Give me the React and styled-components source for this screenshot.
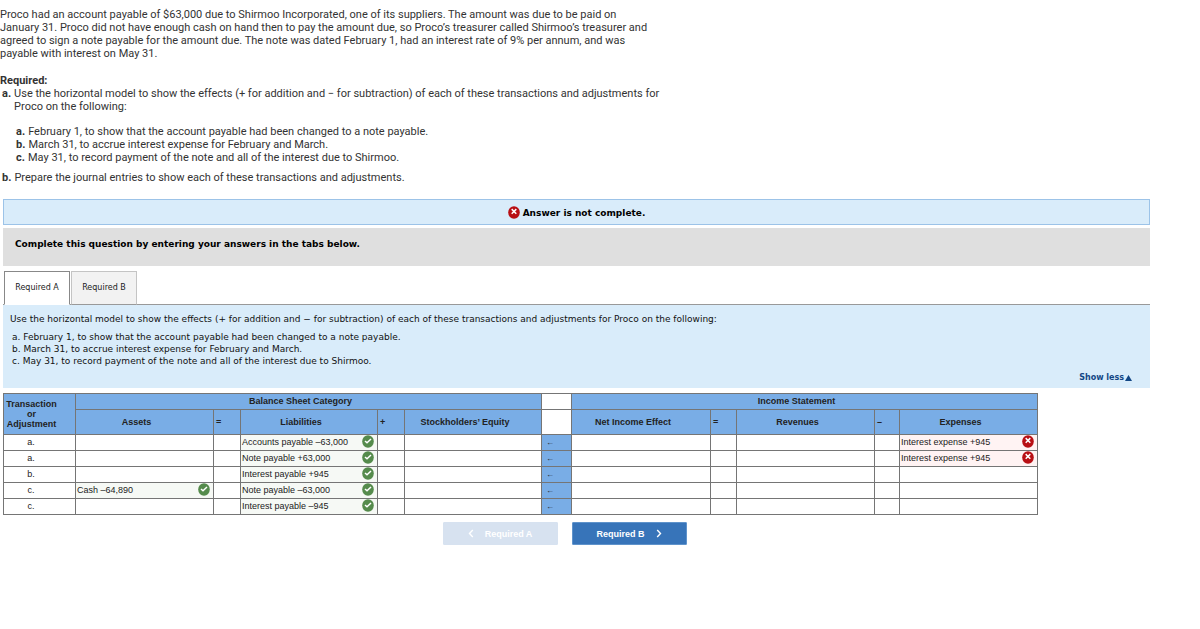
import { useState } from "react";
import styled, { createGlobalStyle } from "styled-components";

const GlobalStyle = createGlobalStyle`
  * {
    box-sizing: border-box;
  }
  body {
    margin: 0;
    background: #ffffff;
    color: #222222;
    font-family: "DejaVu Sans", Verdana, sans-serif;
    font-size: 9px;
  }
  p, ol {
    margin: 0;
    padding: 0;
  }
`;

const Page = styled.main`
  padding: 8px 50px 24px 0;
`;

const Problem = styled.section`
  font-family: Roboto, Lato, sans-serif;
  font-size: 11px;
  line-height: 13px;
  color: #333333;
  white-space: nowrap;
`;

const RequiredLabel = styled.p`
  margin-top: 14px;
  font-weight: bold;
`;

const LetterList = styled.ol`
  list-style: none;
  padding-left: 2px;
  margin: ${(props) => (props.$nested ? "12px 0 7px" : "0")};
`;

const LetterItem = styled.li`
  display: flex;
  gap: 3px;
`;

const Work = styled.section`
  margin: 15px 0 0 3px;
`;

const Banner = styled.div`
  display: flex;
  align-items: center;
  justify-content: center;
  gap: 3px;
  height: 26px;
  padding-top: 1px;
  border: 1px solid #9cc3e8;
  background: #d9ecfa;
  color: #000000;
  font-weight: bold;
`;

const Instruction = styled.p`
  margin-top: 3px;
  padding: 10px 12px 16px;
  background: #dfdfdf;
  color: #000000;
  font-weight: bold;
  line-height: 12px;
`;

const Tabs = styled.div`
  display: flex;
  gap: 1px;
  padding: 5px 1px 0;
  border-bottom: 1px solid #999999;
`;

const Tab = styled.button`
  min-width: 66px;
  height: 34px;
  margin-bottom: -1px;
  padding: 0 9px 2px;
  border: 1px solid ${(props) => (props.$active ? "#888888" : "#c4c4c4")};
  border-bottom-color: ${(props) => (props.$active ? "#ffffff" : "#999999")};
  background: ${(props) => (props.$active ? "#ffffff" : "#f2f2f2")};
  color: #222222;
  font-family: inherit;
  font-size: 8px;
`;

const Panel = styled.div`
  padding: 8px 7px 4px;
  background: #d9ecfa;
  color: #111111;
  line-height: 12px;
`;

const PanelList = styled.ol`
  list-style: none;
  margin: 6px 0 5px;
  padding-left: 2px;
`;

const ShowLess = styled.button`
  display: flex;
  align-items: center;
  gap: 1px;
  margin-left: auto;
  margin-right: 11px;
  padding: 0;
  border: 0;
  background: none;
  color: #134785;
  font-family: inherit;
  font-size: 8px;
  font-weight: bold;
  line-height: 12px;
`;

const Sheet = styled.table`
  width: 90.2%;
  margin-top: 5px;
  border-collapse: collapse;
  table-layout: fixed;
  font-family: "Liberation Sans", Arial, sans-serif;
  font-size: 9px;
  line-height: 11px;
`;

const Col = styled.col`
  width: ${(props) => props.$width}px;
`;

const Head = styled.th`
  height: ${(props) => (props.$tall ? "25px" : "16px")};
  padding: ${(props) => (props.$sign ? "0 2px" : "0 16px 0 0")};
  border: 1px solid #757575;
  background: ${(props) => (props.$blank ? "#ffffff" : "#79ade6")};
  text-align: ${(props) => (props.$sign ? "left" : "center")};
`;

const RowHead = styled(Head)`
  line-height: 10px;
`;

const Cell = styled.td`
  height: 16px;
  padding: 0 2px 0 1px;
  border: 1px solid #757575;
  background: ${(props) => props.$bg || "#ffffff"};
`;

const ArrowCell = styled(Cell)`
  padding-left: 4px;
  font-size: 8px;
`;

const LetterCell = styled(Cell)`
  padding-right: 18px;
  text-align: center;
`;

const Answer = styled.div`
  display: flex;
  align-items: flex-start;
  justify-content: space-between;
  height: 15px;
  padding-right: 1px;
  line-height: 15px;
  white-space: nowrap;
`;

const Nav = styled.nav`
  display: flex;
  justify-content: center;
  gap: 14px;
  margin-top: 7px;
  padding-right: 24px;
`;

const NavButton = styled.button`
  display: flex;
  align-items: center;
  justify-content: center;
  gap: 11px;
  width: 115px;
  height: 23px;
  padding: 0;
  border: 1px solid ${(props) => (props.disabled ? "#d7e2f0" : "#5f93cb")};
  border-radius: 1px;
  background: ${(props) => (props.disabled ? "#d7e2f0" : "#3774b9")};
  color: #ffffff;
  font-family: "Liberation Sans", Arial, sans-serif;
  font-size: 9px;
  font-weight: bold;
`;

const Mark = ({ ok }) => (
  <svg width="12" height="13" viewBox="0 0 12 13" role="img" aria-label={ok ? "Correct" : "Incorrect"}>
    <ellipse cx="6" cy="6.5" rx="5.8" ry="6.2" fill={ok ? "#558b4c" : "#b80f14"} />
    {ok ? (
      <path d="M3 6 5 7.8 9 4" fill="none" stroke="#fff" strokeWidth="1.5" />
    ) : (
      <path d="M3.7 3.1 8.3 7.7M8.3 3.1 3.7 7.7" fill="none" stroke="#fff" strokeWidth="1.5" />
    )}
  </svg>
);

const Chevron = ({ left }) => (
  <svg width="6" height="9" viewBox="0 0 6 9" aria-hidden="true">
    <path
      d={left ? "M4.8 1 1.5 4.5 4.8 8" : "M1.2 1 4.5 4.5 1.2 8"}
      fill="none"
      stroke="#fff"
      strokeWidth="1.4"
    />
  </svg>
);

const colWidths = [72, 138, 27, 137, 27, 137, 30, 139, 26, 138, 25, 138];

const rows = [
  { letter: "a.", liability: "Accounts payable –63,000", expense: "Interest expense +945" },
  { letter: "a.", liability: "Note payable +63,000", expense: "Interest expense +945" },
  { letter: "b.", liability: "Interest payable +945" },
  { letter: "c.", asset: "Cash –64,890", liability: "Note payable –63,000" },
  { letter: "c.", liability: "Interest payable –945" },
];

const AnswerCell = ({ text, ok }) => {
  if (!text) return <Cell />;
  return (
    <Cell $bg={ok ? "#f6f9f5" : "#fff3f3"}>
      <Answer>
        {text}
        <Mark ok={ok} />
      </Answer>
    </Cell>
  );
};

const App = () => {
  const [tab, setTab] = useState("A");

  return (
    <Page>
      <GlobalStyle />
      <Problem>
        <p>
          Proco had an account payable of $63,000 due to Shirmoo Incorporated, one of its suppliers. The amount was due to be paid on
          <br />
          January 31. Proco did not have enough cash on hand then to pay the amount due, so Proco’s treasurer called Shirmoo’s treasurer and
          <br />
          agreed to sign a note payable for the amount due. The note was dated February 1, had an interest rate of 9% per annum, and was
          <br />
          payable with interest on May 31.
        </p>
        <RequiredLabel>Required:</RequiredLabel>
        <LetterList>
          <LetterItem>
            <b>a.</b>
            <div>
              Use the horizontal model to show the effects (+ for addition and − for subtraction) of each of these transactions and adjustments for
              <br />
              Proco on the following:
              <LetterList $nested>
                <LetterItem>
                  <b>a.</b> February 1, to show that the account payable had been changed to a note payable.
                </LetterItem>
                <LetterItem>
                  <b>b.</b> March 31, to accrue interest expense for February and March.
                </LetterItem>
                <LetterItem>
                  <b>c.</b> May 31, to record payment of the note and all of the interest due to Shirmoo.
                </LetterItem>
              </LetterList>
            </div>
          </LetterItem>
          <LetterItem>
            <b>b.</b> Prepare the journal entries to show each of these transactions and adjustments.
          </LetterItem>
        </LetterList>
      </Problem>

      <Work>
        <Banner>
          <Mark />
          Answer is not complete.
        </Banner>
        <Instruction>Complete this question by entering your answers in the tabs below.</Instruction>
        <Tabs role="tablist">
          <Tab role="tab" aria-selected={tab === "A"} $active={tab === "A"} onClick={() => setTab("A")}>
            Required A
          </Tab>
          <Tab role="tab" aria-selected={tab === "B"} $active={tab === "B"} onClick={() => setTab("B")}>
            Required B
          </Tab>
        </Tabs>
        <Panel>
          <p>
            Use the horizontal model to show the effects (+ for addition and − for subtraction) of each of these transactions and adjustments for Proco on the following:
          </p>
          <PanelList>
            <li>a. February 1, to show that the account payable had been changed to a note payable.</li>
            <li>b. March 31, to accrue interest expense for February and March.</li>
            <li>c. May 31, to record payment of the note and all of the interest due to Shirmoo.</li>
          </PanelList>
          <ShowLess>
            Show less
            <svg width="7" height="6" viewBox="0 0 7 6" aria-hidden="true">
              <path d="M3.5 0 7 6H0z" fill="#134785" />
            </svg>
          </ShowLess>
        </Panel>

        <Sheet>
          <colgroup>
            {colWidths.map((w, i) => (
              <Col key={i} $width={w} />
            ))}
          </colgroup>
          <thead>
            <tr>
              <RowHead rowSpan={2}>
                Transaction
                <br />
                or
                <br />
                Adjustment
              </RowHead>
              <Head colSpan={5}>Balance Sheet Category</Head>
              <Head $blank />
              <Head colSpan={5}>Income Statement</Head>
            </tr>
            <tr>
              <Head $tall>Assets</Head>
              <Head $tall $sign>=</Head>
              <Head $tall>Liabilities</Head>
              <Head $tall $sign>+</Head>
              <Head $tall>Stockholders’ Equity</Head>
              <Head $tall $blank />
              <Head $tall>Net Income Effect</Head>
              <Head $tall $sign>=</Head>
              <Head $tall>Revenues</Head>
              <Head $tall $sign>–</Head>
              <Head $tall>Expenses</Head>
            </tr>
          </thead>
          <tbody>
            {rows.map((row, i) => (
              <tr key={i}>
                <LetterCell>{row.letter}</LetterCell>
                <AnswerCell text={row.asset} ok />
                <Cell />
                <AnswerCell text={row.liability} ok />
                <Cell />
                <Cell />
                <ArrowCell $bg="#79ade6">←</ArrowCell>
                <Cell />
                <Cell />
                <Cell />
                <Cell />
                <AnswerCell text={row.expense} />
              </tr>
            ))}
          </tbody>
        </Sheet>

        <Nav>
          <NavButton disabled={tab === "A"} onClick={() => setTab("A")}>
            <Chevron left />
            Required A
          </NavButton>
          <NavButton disabled={tab === "B"} onClick={() => setTab("B")}>
            Required B
            <Chevron />
          </NavButton>
        </Nav>
      </Work>
    </Page>
  );
};

export default App;
